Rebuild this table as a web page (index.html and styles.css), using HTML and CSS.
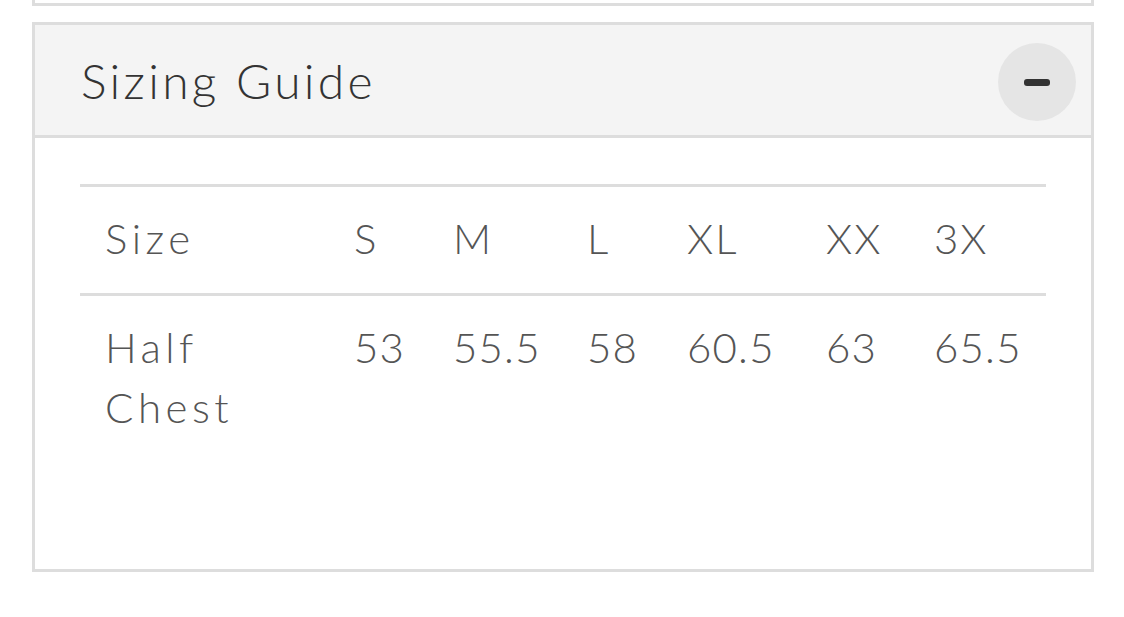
FILE: index.html
```html
<!DOCTYPE html>
<html lang="en">
<head>
<meta charset="utf-8">
<title>Sizing Guide</title>
<link rel="stylesheet" href="styles.css">
</head>
<body>
<div class="page">
  <div class="prev-box"></div>
  <section class="accordion">
    <header class="acc-head">
      <h2 class="acc-title">Sizing Guide</h2>
      <button class="toggle" aria-label="Collapse"><span class="minus"></span></button>
    </header>
    <div class="acc-body">
      <div class="size-table">
        <div class="row head-row">
          <div class="cell label">Size</div>
          <div class="cell">S</div>
          <div class="cell">M</div>
          <div class="cell">L</div>
          <div class="cell">XL</div>
          <div class="cell">XX</div>
          <div class="cell">3X</div>
        </div>
        <div class="row data-row">
          <div class="cell label">Half<br>Chest</div>
          <div class="cell">53</div>
          <div class="cell">55.5</div>
          <div class="cell">58</div>
          <div class="cell">60.5</div>
          <div class="cell">63</div>
          <div class="cell">65.5</div>
        </div>
      </div>
    </div>
  </section>
</div>
</body>
</html>
```
FILE: styles.css
```css
* { box-sizing: border-box; }
html, body { margin: 0; padding: 0; background: #fff; }
body { font-family: Lato, "Open Sans", "Liberation Sans", sans-serif; }

.page {
  width: 1062px;
  margin-left: 32px;
}

.prev-box {
  height: 7px;
  border: 3px solid #dddddd;
  border-top: 0;
  margin-top: -1px;
  margin-bottom: 16px;
}

.accordion {
  border: 3px solid #dddddd;
  background: #fff;
}

.acc-head {
  display: flex;
  align-items: center;
  justify-content: space-between;
  height: 113px;
  background: #f4f4f4;
  border-bottom: 3px solid #dddddd;
  padding: 0 15px 0 46px;
}

.acc-title {
  margin: 0;
  font-weight: 300;
  font-size: 48px;
  color: #333;
  letter-spacing: 3.3px;
}

.toggle {
  width: 78px;
  height: 78px;
  border-radius: 50%;
  border: 0;
  background: #e5e5e5;
  display: flex;
  align-items: center;
  justify-content: center;
  padding: 0;
  margin-top: 4px;
}

.minus {
  width: 26px;
  height: 7px;
  border-radius: 3px;
  background: #333;
}

.acc-body {
  padding: 46px 45px 107px 45px;
}

.size-table {
  color: #555;
  font-size: 42px;
  line-height: 60px;
  font-weight: 300;
}

.row {
  display: grid;
  grid-template-columns: 249px 99px 134px 100px 139px 108px 1fr;
  padding: 0 0 0 25px;
  border-top: 3px solid #dddddd;
}

.head-row {
  padding-top: 21px;
  padding-bottom: 25px;
  letter-spacing: 2px;
}

.data-row {
  padding-top: 21px;
  padding-bottom: 25px;
  letter-spacing: 1.2px;
}

.cell.label {
  letter-spacing: 4.5px;
}
```
